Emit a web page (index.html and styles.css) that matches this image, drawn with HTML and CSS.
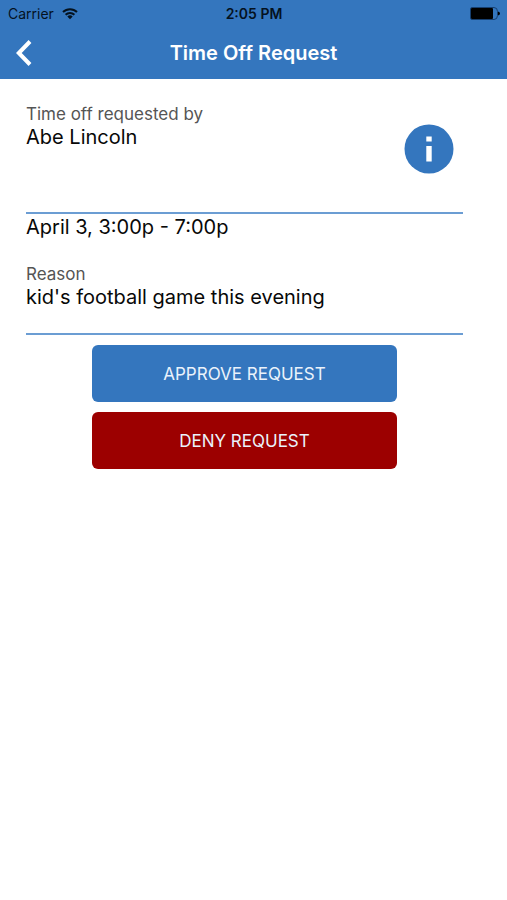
FILE: index.html
```html
<!DOCTYPE html>
<html lang="en">
<head>
<meta charset="utf-8">
<meta name="viewport" content="width=device-width, initial-scale=1">
<title>Time Off Request</title>
<link rel="stylesheet" href="styles.css">
</head>
<body>
<header class="top">
  <div class="status">
    <div class="carrier">
      <span>Carrier</span>
      <svg class="wifi" width="16" height="12" viewBox="0 0 16 12" fill="none" stroke="currentColor" stroke-width="2" aria-hidden="true">
        <path d="M1 4a10 10 0 0 1 14 0M3.600 6.700a6.300 6.300 0 0 1 8.800 0"/>
        <path d="M8 11.300 5.300 8.600a3.800 3.800 0 0 1 5.400 0z" fill="currentColor" stroke="none"/>
      </svg>
    </div>
    <time class="clock">2:05 PM</time>
    <svg class="battery" width="30" height="13" viewBox="0 0 30 13" aria-hidden="true">
      <path d="M2 .5h22q3.500 0 3.500 4v4q0 4-3.500 4H2Q.5 12.500.5 11V2Q.5.5 2 .5z" fill="none" stroke="#163f70"/>
      <rect x="1" y="1" width="22" height="11" rx="1"/>
      <path d="M28 4.500q2 .3 2 2t-2 2z"/>
    </svg>
  </div>
  <nav class="bar">
    <button class="back" type="button" aria-label="Back">
      <svg width="16" height="26" viewBox="0 0 16 26" fill="none" stroke="currentColor" stroke-width="4" aria-hidden="true">
        <path d="M14 1.500 2.800 13 14 24.500"/>
      </svg>
    </button>
    <h1 class="title">Time Off Request</h1>
  </nav>
</header>
<main class="content">
  <section class="field requester">
    <div>
      <h2 class="label">Time off requested by</h2>
      <p class="value">Abe Lincoln</p>
    </div>
    <button class="info" type="button" aria-label="Information">
      <svg width="50" height="50" viewBox="0 0 50 50" aria-hidden="true">
        <circle cx="25" cy="25" r="24.500" fill="#3476be"/>
        <path d="M22.300 12.500h5.400v5h-5.400zM22.300 22h5.400v15.500h-5.400z" fill="#fff"/>
      </svg>
    </button>
  </section>
  <section class="field">
    <p class="value">April 3, 3:00p - 7:00p</p>
    <h2 class="label reason">Reason</h2>
    <p class="value">kid's football game this evening</p>
  </section>
  <div class="actions">
    <button class="action approve" type="button">APPROVE REQUEST</button>
    <button class="action deny" type="button">DENY REQUEST</button>
  </div>
</main>
</body>
</html>
```
FILE: styles.css
```css
* {
  box-sizing: border-box;
}

body {
  margin: 0;
  background: #fff;
  color: #080808;
  font-family: Inter, Roboto, sans-serif;
}

h1, h2, p {
  margin: 0;
  font-weight: 400;
}

button {
  border: 0;
  padding: 0;
  font: inherit;
  cursor: pointer;
}

svg {
  display: block;
}

.top {
  background: #3476be;
}

.status {
  display: grid;
  grid-template-columns: 1fr auto 1fr;
  align-items: center;
  height: 27px;
  padding: 0 7px 0 8px;
  color: #04121f;
  font-size: 14px;
}

.carrier {
  display: flex;
  align-items: center;
  gap: 8px;
}

.clock {
  font-weight: 600;
}

.battery {
  justify-self: end;
}

.bar {
  display: grid;
  grid-template-columns: 48px 1fr 48px;
  align-items: center;
  height: 52px;
}

.back {
  justify-self: start;
  padding: 0 16px;
  background: none;
  color: #fff;
}

.title {
  color: #fff;
  font-size: 20px;
  font-weight: 600;
  text-align: center;
}

.content {
  padding: 24px 44px 24px 26px;
}

.field {
  border-bottom: 2px solid #6b9dd3;
}

.requester {
  display: flex;
  justify-content: space-between;
  min-height: 111px;
}

.label {
  color: #555;
  font-size: 17px;
  line-height: 22px;
}

.reason {
  margin-top: 24px;
}

.value {
  font-size: 20px;
  line-height: 24px;
}

.info {
  align-self: flex-start;
  margin: 21px 9px 0 0;
  border-radius: 50%;
  background: none;
}

.field + .field {
  padding: 1px 0 24px;
}

.actions {
  display: flex;
  flex-direction: column;
  align-items: center;
  gap: 10px;
  padding-top: 10px;
}

.action {
  width: 70%;
  height: 57px;
  border-radius: 6px;
  color: #eaf2fb;
  font-size: 17px;
}

.approve {
  background: #3476be;
}

.deny {
  background: #9c0000;
}
```
